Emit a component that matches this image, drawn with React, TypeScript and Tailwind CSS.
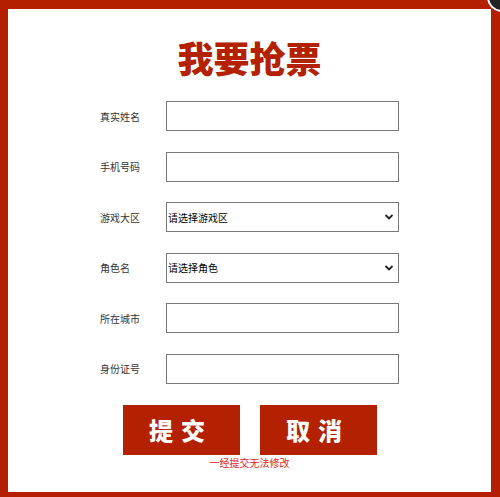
const font = { fontFamily: '"Noto Sans CJK SC", "Noto Sans", sans-serif' };

const rows = [
  { label: "真实姓名", type: "input" },
  { label: "手机号码", type: "input" },
  { label: "游戏大区", type: "select", placeholder: "请选择游戏区" },
  { label: "角色名", type: "select", placeholder: "请选择角色" },
  { label: "所在城市", type: "input" },
  { label: "身份证号", type: "input" },
];

function Chevron() {
  return (
    <svg
      className="pointer-events-none absolute right-[5px] top-1/2 -translate-y-1/2"
      width="10"
      height="7"
      viewBox="0 0 10 7"
      fill="none"
    >
      <path d="M1.5 1.5 L5 5 L8.5 1.5" stroke="#222" strokeWidth="1.8" />
    </svg>
  );
}

export default function App() {
  return (
    <div className="relative h-[497px] w-[500px] overflow-hidden" style={font}>
      <div className="h-full w-full border-t-[9px] border-l-[8px] border-r-[9px] border-b-[5px] border-[#b31f00] bg-white">
        <div className="flex flex-col items-center">
          <h1 className="mt-[29px] text-[36px] font-black leading-[38px] text-[#b32100]">我要抢票</h1>

          <div className="mt-[25px] flex flex-col gap-[20.6px] self-start pl-[92px]">
            {rows.map((r) => (
              <div key={r.label} className="flex items-center">
                <span className="w-[66px] text-[10px] text-[#333]">{r.label}</span>
                {r.type === "input" ? (
                  <input className="h-[30px] w-[233px] border border-[#7a7a7a] bg-white outline-none" />
                ) : (
                  <div className="relative">
                    <select className="h-[30px] w-[233px] appearance-none border border-[#7a7a7a] bg-white pl-[1px] text-[10px] text-black outline-none">
                      <option>{r.placeholder}</option>
                    </select>
                    <Chevron />
                  </div>
                )}
              </div>
            ))}
          </div>

          <div className="mt-[21px] flex gap-[20px]">
            <button className="h-[50px] w-[117px] bg-[#b32100] text-[24px] font-black tracking-[8px] text-white">
              提交
            </button>
            <button className="h-[50px] w-[117px] bg-[#b32100] text-[24px] font-black tracking-[8px] text-white">
              取消
            </button>
          </div>
          <p className="mt-[1px] text-[10px] leading-[14px] text-[#e0241c]">一经提交无法修改</p>
        </div>
      </div>

      {/* close button peeking in from the corner */}
      <div className="absolute left-[487px] top-[-18px] h-[30px] w-[30px] rounded-full border-2 border-white bg-[#222]" />
    </div>
  );
}
